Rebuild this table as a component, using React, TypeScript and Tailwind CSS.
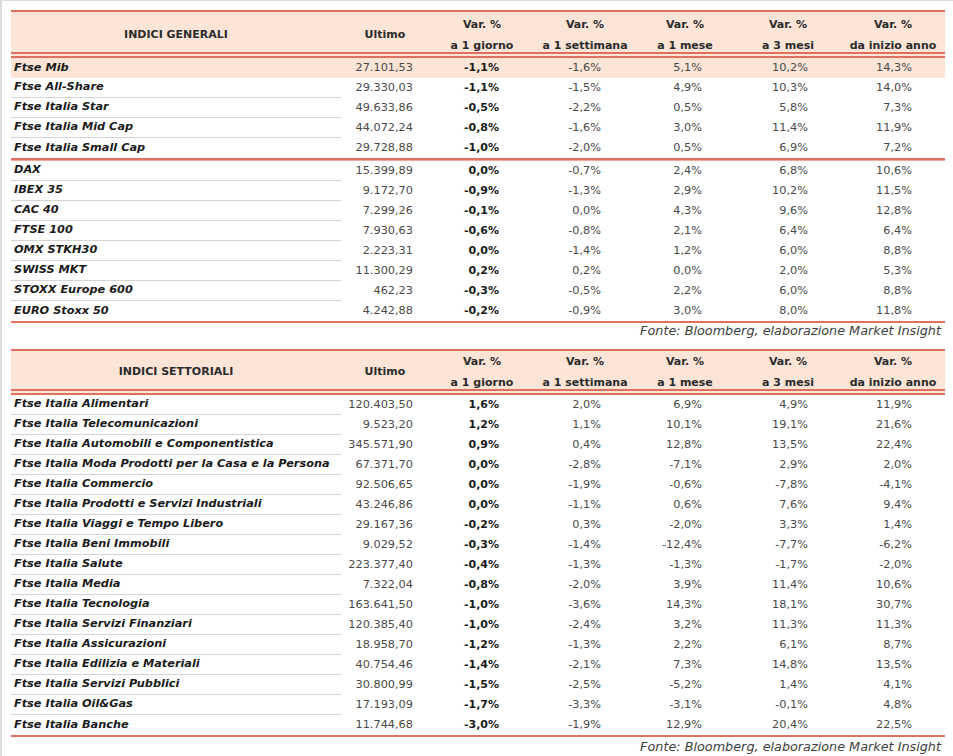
type Row = [string, string, string, string, string, string, string];

const generali: Row[] = [
  ["Ftse Mib", "27.101,53", "-1,1%", "-1,6%", "5,1%", "10,2%", "14,3%"],
  ["Ftse All-Share", "29.330,03", "-1,1%", "-1,5%", "4,9%", "10,3%", "14,0%"],
  ["Ftse Italia Star", "49.633,86", "-0,5%", "-2,2%", "0,5%", "5,8%", "7,3%"],
  ["Ftse Italia Mid Cap", "44.072,24", "-0,8%", "-1,6%", "3,0%", "11,4%", "11,9%"],
  ["Ftse Italia Small Cap", "29.728,88", "-1,0%", "-2,0%", "0,5%", "6,9%", "7,2%"],
];

const esteri: Row[] = [
  ["DAX", "15.399,89", "0,0%", "-0,7%", "2,4%", "6,8%", "10,6%"],
  ["IBEX 35", "9.172,70", "-0,9%", "-1,3%", "2,9%", "10,2%", "11,5%"],
  ["CAC 40", "7.299,26", "-0,1%", "0,0%", "4,3%", "9,6%", "12,8%"],
  ["FTSE 100", "7.930,63", "-0,6%", "-0,8%", "2,1%", "6,4%", "6,4%"],
  ["OMX STKH30", "2.223,31", "0,0%", "-1,4%", "1,2%", "6,0%", "8,8%"],
  ["SWISS MKT", "11.300,29", "0,2%", "0,2%", "0,0%", "2,0%", "5,3%"],
  ["STOXX Europe 600", "462,23", "-0,3%", "-0,5%", "2,2%", "6,0%", "8,8%"],
  ["EURO Stoxx 50", "4.242,88", "-0,2%", "-0,9%", "3,0%", "8,0%", "11,8%"],
];

const settoriali: Row[] = [
  ["Ftse Italia Alimentari", "120.403,50", "1,6%", "2,0%", "6,9%", "4,9%", "11,9%"],
  ["Ftse Italia Telecomunicazioni", "9.523,20", "1,2%", "1,1%", "10,1%", "19,1%", "21,6%"],
  ["Ftse Italia Automobili e Componentistica", "345.571,90", "0,9%", "0,4%", "12,8%", "13,5%", "22,4%"],
  ["Ftse Italia Moda Prodotti per la Casa e la Persona", "67.371,70", "0,0%", "-2,8%", "-7,1%", "2,9%", "2,0%"],
  ["Ftse Italia Commercio", "92.506,65", "0,0%", "-1,9%", "-0,6%", "-7,8%", "-4,1%"],
  ["Ftse Italia Prodotti e Servizi Industriali", "43.246,86", "0,0%", "-1,1%", "0,6%", "7,6%", "9,4%"],
  ["Ftse Italia Viaggi e Tempo Libero", "29.167,36", "-0,2%", "0,3%", "-2,0%", "3,3%", "1,4%"],
  ["Ftse Italia Beni Immobili", "9.029,52", "-0,3%", "-1,4%", "-12,4%", "-7,7%", "-6,2%"],
  ["Ftse Italia Salute", "223.377,40", "-0,4%", "-1,3%", "-1,3%", "-1,7%", "-2,0%"],
  ["Ftse Italia Media", "7.322,04", "-0,8%", "-2,0%", "3,9%", "11,4%", "10,6%"],
  ["Ftse Italia Tecnologia", "163.641,50", "-1,0%", "-3,6%", "14,3%", "18,1%", "30,7%"],
  ["Ftse Italia Servizi Finanziari", "120.385,40", "-1,0%", "-2,4%", "3,2%", "11,3%", "11,3%"],
  ["Ftse Italia Assicurazioni", "18.958,70", "-1,2%", "-1,3%", "2,2%", "6,1%", "8,7%"],
  ["Ftse Italia Edilizia e Materiali", "40.754,46", "-1,4%", "-2,1%", "7,3%", "14,8%", "13,5%"],
  ["Ftse Italia Servizi Pubblici", "30.800,99", "-1,5%", "-2,5%", "-5,2%", "1,4%", "4,1%"],
  ["Ftse Italia Oil&Gas", "17.193,09", "-1,7%", "-3,3%", "-3,1%", "-0,1%", "4,8%"],
  ["Ftse Italia Banche", "11.744,68", "-3,0%", "-1,9%", "12,9%", "20,4%", "22,5%"],
];

const cols = "grid grid-cols-[330px_88px_106px_100px_100px_106px_104px]";

function Header({ title, tall }: { title: string; tall: boolean }) {
  const sub = ["a 1 giorno", "a 1 settimana", "a 1 mese", "a 3 mesi", "da inizio anno"];
  return (
    <div className="border-t-2 border-[#df6f5e]">
      <div className={`${cols} ${tall ? "h-[40px] pt-[2px]" : "h-[38px]"} bg-[#fce4d6] font-bold text-[#2b2b2b]`}>
        <div className="flex items-center justify-center">{title}</div>
        <div className="flex items-center justify-center">Ultimo</div>
        {sub.map((s) => (
          <div key={s} className="flex flex-col items-center justify-center leading-[21px]">
            <span>Var. %</span>
            <span>{s}</span>
          </div>
        ))}
      </div>
      <div className="h-[6px] border-y-2 border-[#df6f5e] bg-[#fce4d6]" />
    </div>
  );
}

const pads = ["pr-[16px]", "pr-[36px]", "pr-[34px]", "pr-[33px]", "pr-[33px]", "pr-[33px]"];

function DataRow({ row, last, highlight }: { row: Row; last: boolean; highlight?: boolean }) {
  const [name, ...vals] = row;
  return (
    <div className={`${cols} h-[20px] ${highlight ? "bg-[#fce4d6]" : ""}`}>
      <div
        className={`flex items-center pl-[3px] text-[11.3px] font-bold italic text-[#1a1a1a] ${
          last || highlight ? "" : "border-b border-[#d4d4d4]"
        }`}
      >
        {name}
      </div>
      {vals.map((v, i) => (
        <div
          key={i}
          className={`flex items-center justify-end ${pads[i]} ${
            i === 1 ? "font-bold text-[#1a1a1a]" : "text-[11.3px] text-[#4a4a4a]"
          }`}
        >
          {v}
        </div>
      ))}
    </div>
  );
}

function Fonte() {
  return (
    <div className="pr-[4px] text-right italic text-[#404040] text-[12.8px] leading-[16px]">
      Fonte: Bloomberg, elaborazione Market Insight
    </div>
  );
}

export default function App() {
  return (
    <div
      className="w-[953px] h-[756px] overflow-hidden bg-white border-l-2 border-t border-[#d9dedb] text-[11px]"
      style={{ fontFamily: '"DejaVu Sans", sans-serif' }}
    >
      <div className="ml-[9px] mt-[9px] w-[934px]">
        <Header title="INDICI GENERALI" tall />
        {generali.map((r, i) => (
          <DataRow key={r[0]} row={r} last={i === generali.length - 1} highlight={i === 0} />
        ))}
        <div className="h-[3px] border-t-2 border-[#df6f5e] bg-[#f2a99c]" />
        {esteri.map((r, i) => (
          <DataRow key={r[0]} row={r} last={i === esteri.length - 1} />
        ))}
        <div className="h-[2px] bg-[#df6f5e]" />
        <div className="h-[26px]">
          <Fonte />
        </div>
        <Header title="INDICI SETTORIALI" tall={false} />
        {settoriali.map((r, i) => (
          <DataRow key={r[0]} row={r} last={i === settoriali.length - 1} />
        ))}
        <div className="h-[2px] bg-[#df6f5e]" />
        <div className="pt-[2px]">
          <Fonte />
        </div>
      </div>
    </div>
  );
}
